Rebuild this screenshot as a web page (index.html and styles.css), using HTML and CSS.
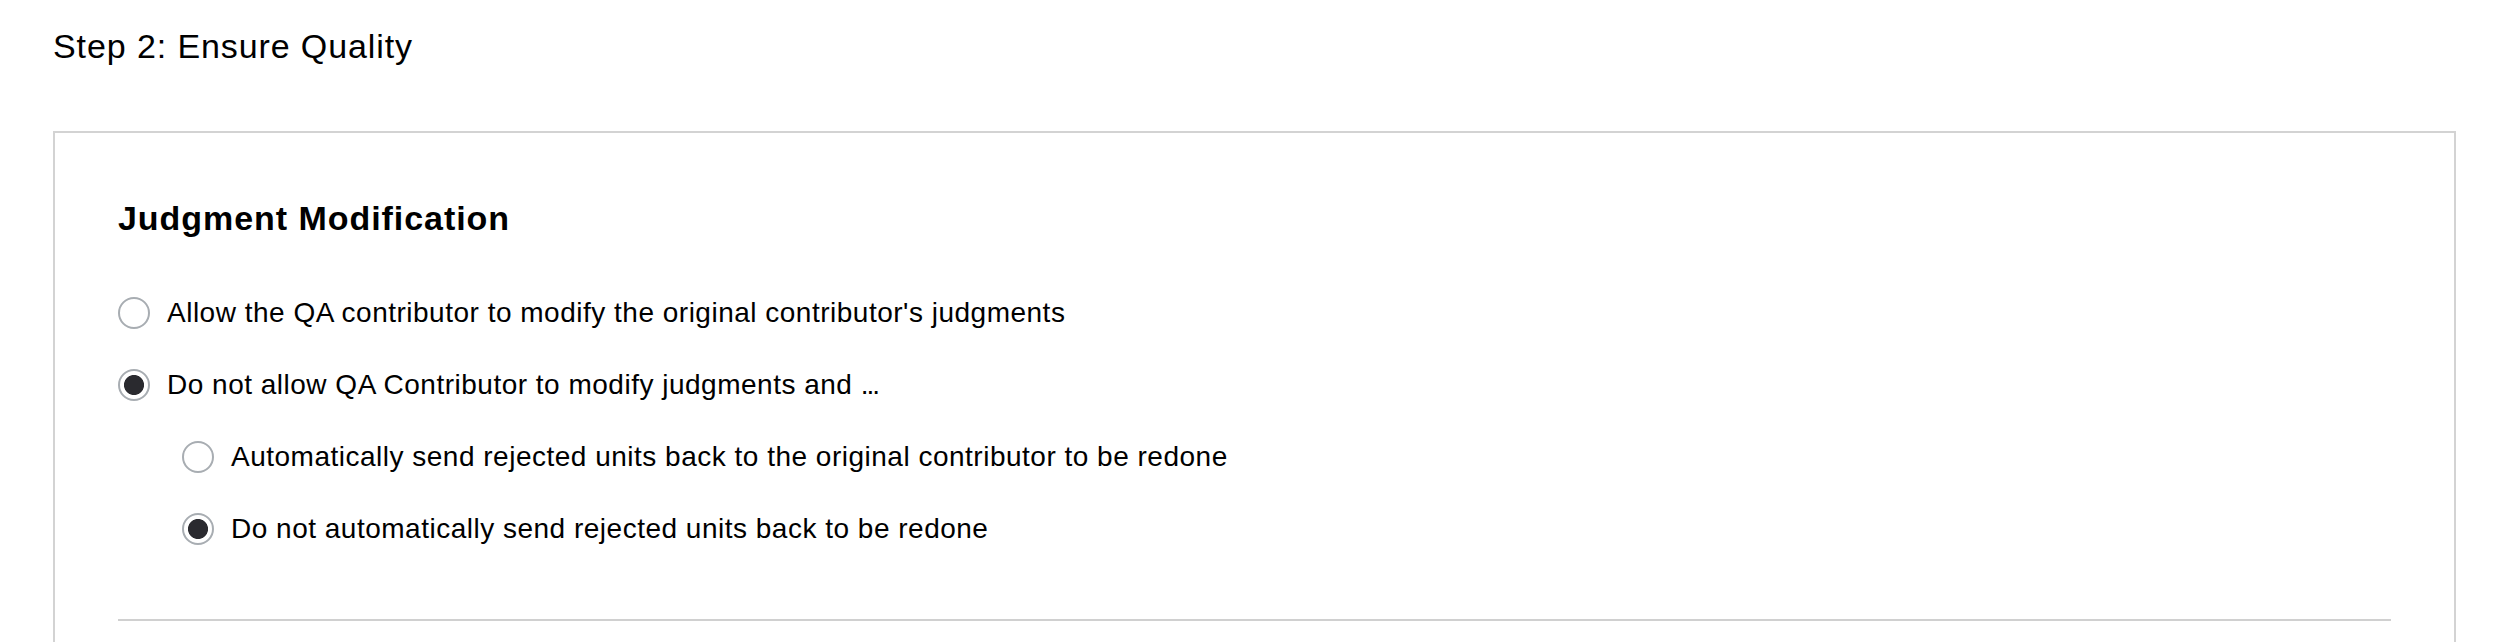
FILE: index.html
```html
<!DOCTYPE html>
<html lang="en">
<head>
<meta charset="utf-8">
<title>Step 2: Ensure Quality</title>
<link rel="stylesheet" href="styles.css">
</head>
<body>
<main class="page">
  <h1 class="step-title">Step 2: Ensure Quality</h1>
  <section class="card">
    <h2 class="card-title">Judgment Modification</h2>
    <div class="options">
      <label class="option">
        <input class="radio" type="radio" name="mod" value="allow">
        <span class="option-text">Allow the QA contributor to modify the original contributor's judgments</span>
      </label>
      <label class="option">
        <input class="radio" type="radio" name="mod" value="deny" checked>
        <span class="option-text">Do not allow QA Contributor to modify judgments and <span class="dots">...</span></span>
      </label>
      <label class="option option-sub">
        <input class="radio" type="radio" name="send" value="auto">
        <span class="option-text">Automatically send rejected units back to the original contributor to be redone</span>
      </label>
      <label class="option option-sub">
        <input class="radio" type="radio" name="send" value="manual" checked>
        <span class="option-text">Do not automatically send rejected units back to be redone</span>
      </label>
    </div>
    <hr class="divider">
  </section>
</main>
</body>
</html>
```

FILE: styles.css
```css
html, body {
  margin: 0;
  padding: 0;
  background: #ffffff;
}

body {
  font-family: "Liberation Sans", Arial, sans-serif;
  color: #000000;
}

.page {
  padding: 26px 52px 0 53px;
}

.step-title {
  margin: 0;
  font-size: 34px;
  line-height: 40px;
  font-weight: 400;
  letter-spacing: 0.9px;
  color: #000000;
}

.card {
  margin-top: 65px;
  border: 2px solid #d3d3d3;
  padding: 65px 63px 90px 63px;
}

.card-title {
  margin: 0;
  font-size: 34px;
  line-height: 40px;
  font-weight: 700;
  letter-spacing: 0.95px;
  color: #000000;
}

.options {
  margin-top: 59px;
  display: flex;
  flex-direction: column;
  gap: 40px;
}

.option {
  display: flex;
  align-items: center;
  gap: 17px;
  height: 32px;
  cursor: pointer;
}

.option-sub {
  padding-left: 64px;
}

.radio {
  appearance: none;
  -webkit-appearance: none;
  margin: 0;
  flex: 0 0 auto;
  width: 32px;
  height: 32px;
  border-radius: 50%;
  border: 2px solid #a8adb2;
  background: #ffffff;
  box-sizing: border-box;
}

.radio:checked {
  background: radial-gradient(circle, #2a2a2f 0 9.6px, #ffffff 10.4px);
}

.option-text {
  font-size: 28px;
  line-height: 32px;
  letter-spacing: 0.5px;
  white-space: nowrap;
}

.dots {
  letter-spacing: -2px;
}

.divider {
  margin: 74px 0 0 0;
  border: 0;
  height: 2px;
  background: #d0d0d0;
}
```
